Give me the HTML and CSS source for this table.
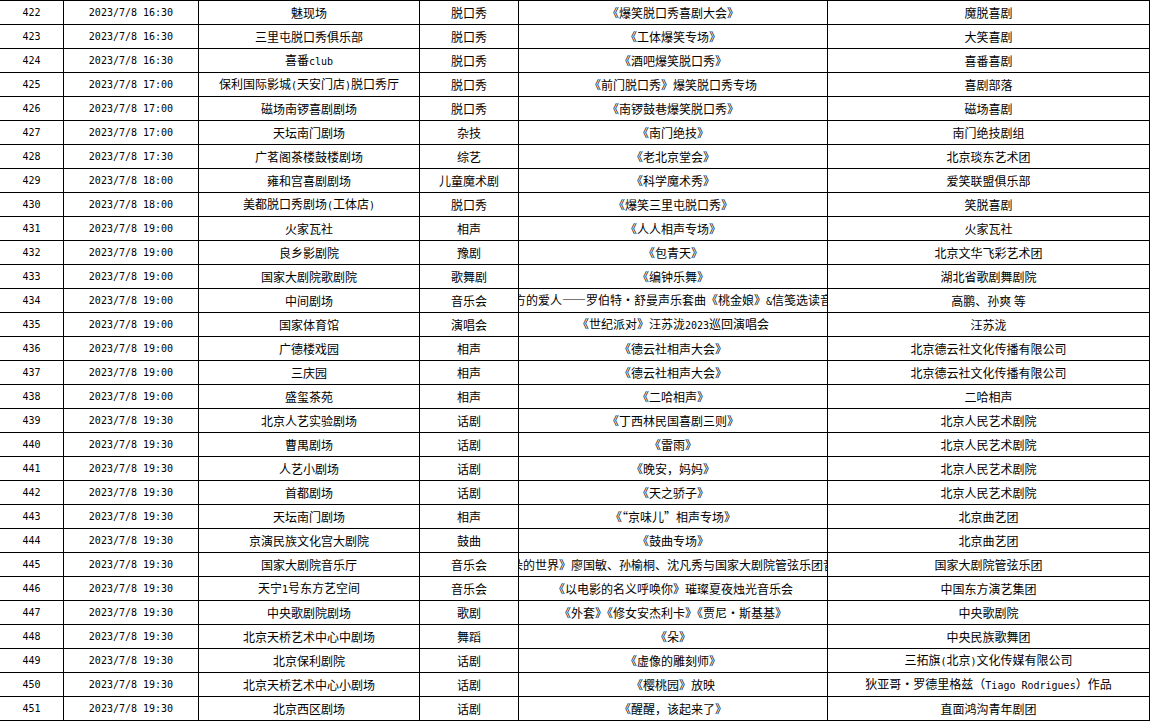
FILE: index.html
```html
<!DOCTYPE html>
<html lang="zh-CN">
<head>
<meta charset="utf-8">
<title>演出安排</title>
<link rel="stylesheet" href="styles.css">
</head>
<body>
<div class="sheet">
  <div class="row"><div class="c n">422</div><div class="c n">2023/7/8 16:30</div><div class="c">魅现场</div><div class="c">脱口秀</div><div class="c"><span>《爆笑脱口秀喜剧大会》</span></div><div class="c">魔脱喜剧</div></div>
  <div class="row"><div class="c n">423</div><div class="c n">2023/7/8 16:30</div><div class="c">三里屯脱口秀俱乐部</div><div class="c">脱口秀</div><div class="c"><span>《工体爆笑专场》</span></div><div class="c">大笑喜剧</div></div>
  <div class="row"><div class="c n">424</div><div class="c n">2023/7/8 16:30</div><div class="c"><span>喜番<span class="lat">club</span></span></div><div class="c">脱口秀</div><div class="c"><span>《酒吧爆笑脱口秀》</span></div><div class="c">喜番喜剧</div></div>
  <div class="row"><div class="c n">425</div><div class="c n">2023/7/8 17:00</div><div class="c"><span>保利国际影城<span class="lat">(</span>天安门店<span class="lat">)</span>脱口秀厅</span></div><div class="c">脱口秀</div><div class="c"><span>《前门脱口秀》爆笑脱口秀专场</span></div><div class="c">喜剧部落</div></div>
  <div class="row"><div class="c n">426</div><div class="c n">2023/7/8 17:00</div><div class="c">磁场南锣喜剧剧场</div><div class="c">脱口秀</div><div class="c"><span>《南锣鼓巷爆笑脱口秀》</span></div><div class="c">磁场喜剧</div></div>
  <div class="row"><div class="c n">427</div><div class="c n">2023/7/8 17:00</div><div class="c">天坛南门剧场</div><div class="c">杂技</div><div class="c"><span>《南门绝技》</span></div><div class="c">南门绝技剧组</div></div>
  <div class="row"><div class="c n">428</div><div class="c n">2023/7/8 17:30</div><div class="c">广茗阁茶楼鼓楼剧场</div><div class="c">综艺</div><div class="c"><span>《老北京堂会》</span></div><div class="c">北京琰东艺术团</div></div>
  <div class="row"><div class="c n">429</div><div class="c n">2023/7/8 18:00</div><div class="c">雍和宫喜剧剧场</div><div class="c">儿童魔术剧</div><div class="c"><span>《科学魔术秀》</span></div><div class="c">爱笑联盟俱乐部</div></div>
  <div class="row"><div class="c n">430</div><div class="c n">2023/7/8 18:00</div><div class="c"><span>美都脱口秀剧场<span class="lat">(</span>工体店<span class="lat">)</span></span></div><div class="c">脱口秀</div><div class="c"><span>《爆笑三里屯脱口秀》</span></div><div class="c">笑脱喜剧</div></div>
  <div class="row"><div class="c n">431</div><div class="c n">2023/7/8 19:00</div><div class="c">火家瓦社</div><div class="c">相声</div><div class="c"><span>《人人相声专场》</span></div><div class="c">火家瓦社</div></div>
  <div class="row"><div class="c n">432</div><div class="c n">2023/7/8 19:00</div><div class="c">良乡影剧院</div><div class="c">豫剧</div><div class="c"><span>《包青天》</span></div><div class="c">北京文华飞彩艺术团</div></div>
  <div class="row"><div class="c n">433</div><div class="c n">2023/7/8 19:00</div><div class="c">国家大剧院歌剧院</div><div class="c">歌舞剧</div><div class="c"><span>《编钟乐舞》</span></div><div class="c">湖北省歌剧舞剧院</div></div>
  <div class="row"><div class="c n">434</div><div class="c n">2023/7/8 19:00</div><div class="c">中间剧场</div><div class="c">音乐会</div><div class="c"><span>《致远方的爱人——罗伯特・舒曼声乐套曲《桃金娘》<span class="lat">&amp;</span>信笺选读音乐会》</span></div><div class="c">高鹏、孙爽 等</div></div>
  <div class="row"><div class="c n">435</div><div class="c n">2023/7/8 19:00</div><div class="c">国家体育馆</div><div class="c">演唱会</div><div class="c"><span>《世纪派对》汪苏泷<span class="lat">2023</span>巡回演唱会</span></div><div class="c">汪苏泷</div></div>
  <div class="row"><div class="c n">436</div><div class="c n">2023/7/8 19:00</div><div class="c">广德楼戏园</div><div class="c">相声</div><div class="c"><span>《德云社相声大会》</span></div><div class="c">北京德云社文化传播有限公司</div></div>
  <div class="row"><div class="c n">437</div><div class="c n">2023/7/8 19:00</div><div class="c">三庆园</div><div class="c">相声</div><div class="c"><span>《德云社相声大会》</span></div><div class="c">北京德云社文化传播有限公司</div></div>
  <div class="row"><div class="c n">438</div><div class="c n">2023/7/8 19:00</div><div class="c">盛玺茶苑</div><div class="c">相声</div><div class="c"><span>《二哈相声》</span></div><div class="c">二哈相声</div></div>
  <div class="row"><div class="c n">439</div><div class="c n">2023/7/8 19:30</div><div class="c">北京人艺实验剧场</div><div class="c">话剧</div><div class="c"><span>《丁西林民国喜剧三则》</span></div><div class="c">北京人民艺术剧院</div></div>
  <div class="row"><div class="c n">440</div><div class="c n">2023/7/8 19:30</div><div class="c">曹禺剧场</div><div class="c">话剧</div><div class="c"><span>《雷雨》</span></div><div class="c">北京人民艺术剧院</div></div>
  <div class="row"><div class="c n">441</div><div class="c n">2023/7/8 19:30</div><div class="c">人艺小剧场</div><div class="c">话剧</div><div class="c"><span>《晚安，妈妈》</span></div><div class="c">北京人民艺术剧院</div></div>
  <div class="row"><div class="c n">442</div><div class="c n">2023/7/8 19:30</div><div class="c">首都剧场</div><div class="c">话剧</div><div class="c"><span>《天之骄子》</span></div><div class="c">北京人民艺术剧院</div></div>
  <div class="row"><div class="c n">443</div><div class="c n">2023/7/8 19:30</div><div class="c">天坛南门剧场</div><div class="c">相声</div><div class="c"><span>《“京味儿”相声专场》</span></div><div class="c">北京曲艺团</div></div>
  <div class="row"><div class="c n">444</div><div class="c n">2023/7/8 19:30</div><div class="c">京演民族文化宫大剧院</div><div class="c">鼓曲</div><div class="c"><span>《鼓曲专场》</span></div><div class="c">北京曲艺团</div></div>
  <div class="row"><div class="c n">445</div><div class="c n">2023/7/8 19:30</div><div class="c">国家大剧院音乐厅</div><div class="c">音乐会</div><div class="c"><span>《花朵的世界》廖国敏、孙榆桐、沈凡秀与国家大剧院管弦乐团音乐会</span></div><div class="c">国家大剧院管弦乐团</div></div>
  <div class="row"><div class="c n">446</div><div class="c n">2023/7/8 19:30</div><div class="c"><span>天宁<span class="lat">1</span>号东方艺空间</span></div><div class="c">音乐会</div><div class="c"><span>《以电影的名义呼唤你》璀璨夏夜烛光音乐会</span></div><div class="c">中国东方演艺集团</div></div>
  <div class="row"><div class="c n">447</div><div class="c n">2023/7/8 19:30</div><div class="c">中央歌剧院剧场</div><div class="c">歌剧</div><div class="c"><span>《外套》《修女安杰利卡》《贾尼・斯基基》</span></div><div class="c">中央歌剧院</div></div>
  <div class="row"><div class="c n">448</div><div class="c n">2023/7/8 19:30</div><div class="c">北京天桥艺术中心中剧场</div><div class="c">舞蹈</div><div class="c"><span>《朵》</span></div><div class="c">中央民族歌舞团</div></div>
  <div class="row"><div class="c n">449</div><div class="c n">2023/7/8 19:30</div><div class="c">北京保利剧院</div><div class="c">话剧</div><div class="c"><span>《虚像的雕刻师》</span></div><div class="c"><span>三拓旗<span class="lat">(</span>北京<span class="lat">)</span>文化传媒有限公司</span></div></div>
  <div class="row"><div class="c n">450</div><div class="c n">2023/7/8 19:30</div><div class="c">北京天桥艺术中心小剧场</div><div class="c">话剧</div><div class="c"><span>《樱桃园》放映</span></div><div class="c"><span>狄亚哥・罗德里格兹（<span class="lat">Tiago Rodrigues</span>）作品</span></div></div>
  <div class="row"><div class="c n">451</div><div class="c n">2023/7/8 19:30</div><div class="c">北京西区剧场</div><div class="c">话剧</div><div class="c"><span>《醒醒，该起来了》</span></div><div class="c">直面鸿沟青年剧团</div></div>
</div>
</body>
</html>
```

FILE: styles.css
```css
html, body {
  margin: 0;
  padding: 0;
  background: #ffffff;
}

body {
  font-family: "Noto Sans CJK SC", "Noto Sans", sans-serif;
  font-size: 12px;
  color: #000000;
}

.sheet {
  width: 1150px;
  border-top: 1px solid #000000;
}

.row {
  display: grid;
  grid-template-columns: 64px 135px 221px 99px 309px 322px;
  height: 24px;
}

.c {
  box-sizing: border-box;
  height: 24px;
  border-right: 1px solid #000000;
  border-bottom: 1px solid #000000;
  display: flex;
  align-items: center;
  justify-content: center;
  overflow: hidden;
  white-space: nowrap;
  line-height: 14px;
}

.c > span {
  flex: none;
  white-space: nowrap;
}

.n,
.lat {
  font-family: "DejaVu Sans Mono", "Liberation Mono", monospace;
  font-size: 10px;
}
```
